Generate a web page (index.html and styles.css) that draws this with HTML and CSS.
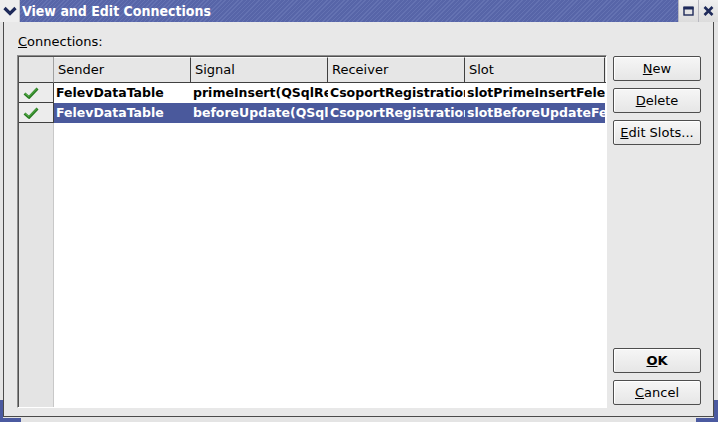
FILE: index.html
```html
<!DOCTYPE html>
<html>
<head>
<meta charset="utf-8">
<link rel="stylesheet" href="styles.css">
</head>
<body>
<div class="window">
  <div class="titlebar">
    <div class="menu-btn">
      <svg width="14" height="10" viewBox="0 0 14 10"><path d="M1.5 2 L7 7.5 L12.5 2" fill="none" stroke="#1e2a5a" stroke-width="3.2"/></svg>
    </div>
    <div class="title">View and Edit Connections</div>
    <div class="tb-buttons">
      <div class="tb-btn">
        <svg width="11" height="10" viewBox="0 0 11 10"><rect x="1" y="1.5" width="9" height="7.5" fill="none" stroke="#1e2a5a" stroke-width="1.4"/><rect x="0.5" y="0.5" width="10" height="3" fill="#1e2a5a"/></svg>
      </div>
      <div class="tb-btn">
        <svg width="11" height="10" viewBox="0 0 11 10"><path d="M1.5 1 L9.5 9 M9.5 1 L1.5 9" stroke="#1e2a5a" stroke-width="2.6"/></svg>
      </div>
    </div>
  </div>
  <div class="client">
    <div class="label"><span class="ul">C</span>onnections:</div>
    <div class="main">
      <div class="table">
        <div class="hrow">
          <div class="corner"></div>
          <div class="hcell c1">Sender</div>
          <div class="hcell c2">Signal</div>
          <div class="hcell c3">Receiver</div>
          <div class="hcell c4">Slot</div>
          <div class="hfill"></div>
        </div>
        <div class="row">
          <div class="rhead"><svg width="16" height="12" viewBox="0 0 16 12"><path d="M1.5 6.5 L6 10.5 L14.5 1.5" fill="none" stroke="#2b7d23" stroke-width="2.8" stroke-linejoin="round"/><path d="M2 6.5 L6 9.5 L14 1.5" fill="none" stroke="#5ab84c" stroke-width="1"/></svg></div>
          <div class="cell c1">FelevDataTable</div>
          <div class="cell c2">primeInsert(QSqlRecord*)</div>
          <div class="cell c3">CsoportRegistrationForm</div>
          <div class="cell c4">slotPrimeInsertFelev(QSqlRecord*)</div>
        </div>
        <div class="row selected">
          <div class="rhead"><svg width="16" height="12" viewBox="0 0 16 12"><path d="M1.5 6.5 L6 10.5 L14.5 1.5" fill="none" stroke="#2b7d23" stroke-width="2.8" stroke-linejoin="round"/><path d="M2 6.5 L6 9.5 L14 1.5" fill="none" stroke="#5ab84c" stroke-width="1"/></svg></div>
          <div class="cell c1">FelevDataTable</div>
          <div class="cell c2">beforeUpdate(QSqlRecord*)</div>
          <div class="cell c3">CsoportRegistrationForm</div>
          <div class="cell c4">slotBeforeUpdateFelev(QSqlRecord*)</div>
        </div>
        <div class="rest">
          <div class="rest-head"></div>
          <div class="rest-body"></div>
        </div>
      </div>
      <div class="buttons">
        <div class="group">
          <button class="btn"><span class="ul">N</span>ew</button>
          <button class="btn"><span class="ul">D</span>elete</button>
          <button class="btn"><span class="ul">E</span>dit Slots...</button>
        </div>
        <div class="group">
          <button class="btn bold"><span class="ul">O</span>K</button>
          <button class="btn"><span class="ul">C</span>ancel</button>
        </div>
      </div>
    </div>
  </div>
  <div class="corner-bl"></div>
  <div class="corner-br"></div>
</div>
</body>
</html>
```

FILE: styles.css
```css
* { box-sizing: border-box; }
html, body { margin: 0; padding: 0; }
body {
  width: 718px;
  height: 422px;
  overflow: hidden;
  font-family: "DejaVu Sans", sans-serif;
  font-size: 13px;
  color: #000;
}
.ul { text-decoration: underline; }
.window {
  position: relative;
  width: 718px;
  height: 422px;
  display: flex;
  flex-direction: column;
  background: #e4e4e4;
}
.titlebar {
  height: 22px;
  display: flex;
  align-items: stretch;
  background: repeating-linear-gradient(135deg, #6472b2 0 1px, #5765a8 1px 3px);
  color: #fff;
}
.menu-btn {
  width: 20px;
  background: #eeeeee;
  display: flex;
  align-items: center;
  justify-content: center;
  border-right: 1px solid #c8c8cc;
}
.title {
  flex: 1;
  font-family: "DejaVu Sans Condensed", "DejaVu Sans", sans-serif;
  font-stretch: condensed;
  font-weight: bold;
  font-size: 14px;
  line-height: 22px;
  padding-left: 2px;
  white-space: nowrap;
}
.tb-buttons {
  display: flex;
}
.tb-btn {
  width: 20px;
  background: linear-gradient(#f0f0f0, #dcdcdc);
  border-left: 1px solid #b8b8c0;
  display: flex;
  align-items: center;
  justify-content: center;
}
.client {
  flex: 1;
  margin: 0 4px 5px 3px;
  border-left: 1px solid #4a4a4a;
  border-right: 1px solid #4a4a4a;
  border-bottom: 1px solid #4a4a4a;
  background: #e8e8e8;
  padding: 12px 12px 8px 13px;
  display: flex;
  flex-direction: column;
}
.label {
  line-height: 16px;
  height: 21px;
  padding-left: 1px;
}
.main {
  flex: 1;
  display: flex;
  gap: 6px;
}
.table {
  width: 590px;
  display: flex;
  flex-direction: column;
  border: 1px solid;
  border-color: #8c8c8c #ffffff #ffffff #8c8c8c;
  box-shadow: inset 1px 1px 0 #505050;
  padding: 1px 0 0 1px;
  background: #fff;
}
.hrow {
  display: flex;
  height: 26px;
  background: #e6e6e6;
}
.corner {
  width: 35px;
  border-right: 1px solid #a0a0a0;
  border-bottom: 1px solid #404040;
  background: #e6e6e6;
}
.hcell {
  border-right: 1px solid #404040;
  border-bottom: 1px solid #404040;
  border-top: 1px solid #fafafa;
  padding-left: 4px;
  line-height: 24px;
  white-space: nowrap;
  overflow: hidden;
}
.hfill {
  flex: 1;
  border-bottom: 1px solid #404040;
}
.c1 { width: 137px; }
.c2 { width: 137px; }
.c3 { width: 137px; }
.c4 { width: 140px; }
.row {
  display: flex;
  height: 20px;
  font-weight: bold;
  font-size: 12.5px;
}
.rhead {
  width: 35px;
  background: #ececec;
  border-right: 1px solid #404040;
  border-bottom: 1px solid #404040;
  display: flex;
  align-items: center;
  padding-left: 4px;
}
.cell {
  line-height: 19px;
  padding-left: 2px;
  white-space: nowrap;
  overflow: hidden;
}
.selected .cell {
  background: #4a599c;
  color: #fff;
}
.rest {
  flex: 1;
  display: flex;
}
.rest-head {
  width: 35px;
  background: #e4e4e4;
  border-right: 1px solid #c8c8c8;
}
.rest-body {
  flex: 1;
  background: #fff;
}
.buttons {
  width: 88px;
  padding-top: 1px;
  padding-bottom: 3px;
  display: flex;
  flex-direction: column;
  justify-content: space-between;
}
.group {
  display: flex;
  flex-direction: column;
  gap: 7px;
}
.btn {
  height: 25px;
  width: 88px;
  font-family: "DejaVu Sans", sans-serif;
  font-size: 13px;
  color: #000;
  background: linear-gradient(#f6f6f6, #e6e6e6);
  border: 1px solid #4e4e4e;
  border-radius: 2px;
  padding: 0;
  box-shadow: inset 1px 1px 0 #ffffff;
}
.btn.bold { font-weight: bold; }
.corner-bl {
  position: absolute;
  left: 0;
  bottom: 0;
  width: 21px;
  height: 22px;
  border-left: 3px solid #4b5aa0;
  border-bottom: 4px solid #4b5aa0;
}
.corner-br {
  position: absolute;
  right: 0;
  bottom: 0;
  width: 22px;
  height: 22px;
  border-right: 4px solid #4b5aa0;
  border-bottom: 4px solid #4b5aa0;
}
```
